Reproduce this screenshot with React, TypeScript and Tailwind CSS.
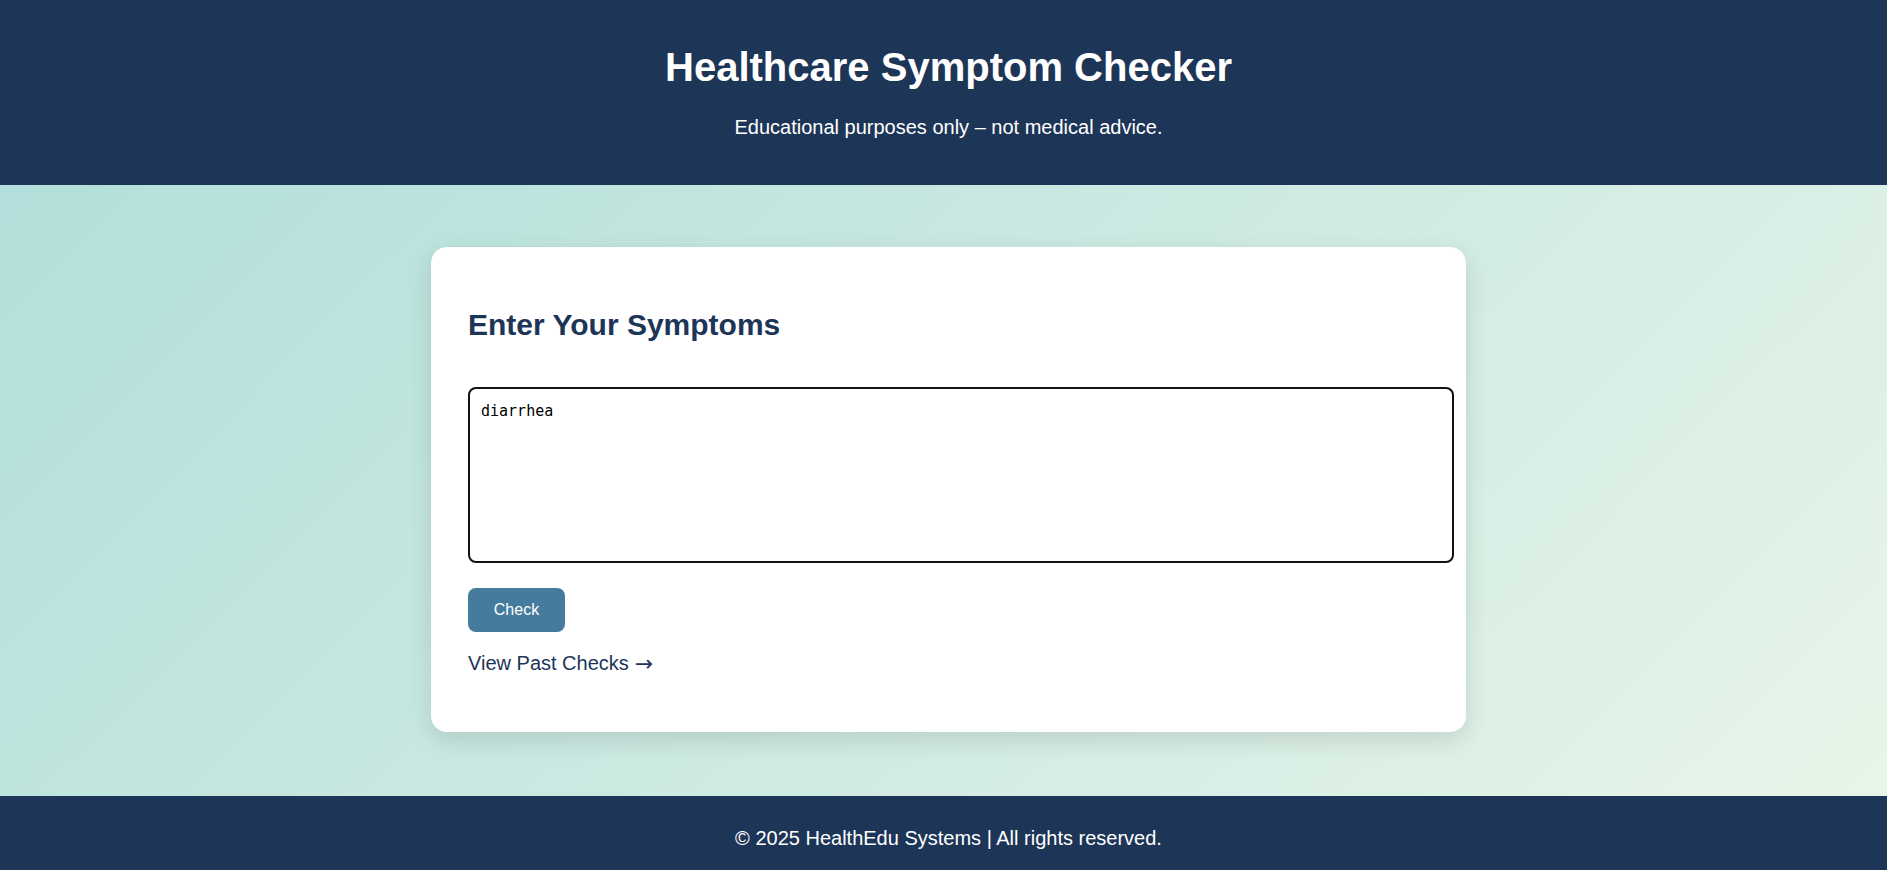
import { useEffect, useRef } from "react";

export default function App() {
  const boxRef = useRef<HTMLTextAreaElement>(null);

  useEffect(() => {
    const el = boxRef.current;
    if (el) {
      el.focus();
      el.setSelectionRange(el.value.length, el.value.length);
    }
  }, []);

  return (
    <div className="min-h-screen flex flex-col font-['Liberation_Sans',Arial,sans-serif]">
      {/* Header */}
      <header className="bg-[#1d3557] text-white text-center pl-[10px] pt-[44px] pb-[46px]">
        <h1 className="text-[40px] leading-[46px] font-bold">
          Healthcare Symptom Checker
        </h1>
        <p className="mt-[26px] text-[20px] leading-[23px]">
          Educational purposes only – not medical advice.
        </p>
      </header>

      {/* Main */}
      <main className="bg-[linear-gradient(135deg,#b2dfdb,#e8f5e9)] flex justify-center pl-[10px] pt-[62px] pb-[64px]">
        <div className="w-[1035px] bg-white rounded-2xl shadow-[0_8px_24px_rgba(0,0,0,0.12)] px-[37px] pt-[61px] pb-[57px]">
          <h2 className="text-[30px] leading-[34px] font-bold text-[#1d3557]">
            Enter Your Symptoms
          </h2>
          <textarea
            ref={boxRef}
            defaultValue="diarrhea"
            className="block mt-[45px] w-[986px] h-[176px] border-2 border-[#111] rounded-lg px-[11px] pt-[12px] pb-[8px] font-['DejaVu_Sans_Mono',monospace] text-[15px] leading-[20px] text-black outline-none resize-none caret-black"
          />
          <button className="mt-[25px] w-[97px] h-[44px] rounded-lg bg-[#457b9d] text-white text-[16px]">
            Check
          </button>
          <a
            href="#"
            className="mt-[20px] flex items-center gap-[6px] h-[23px] text-[20px] leading-[23px] text-[#1d3557] w-fit"
          >
            <span>View Past Checks</span>
            <span className="font-['DejaVu_Sans',sans-serif] text-[22px] leading-[23px]">→</span>
          </a>
        </div>
      </main>

      {/* Footer */}
      <footer className="bg-[#1d3557] text-white text-center pl-[10px] pt-[31px] pb-[32px]">
        <p className="text-[20px] leading-[23px]">
          © 2025 HealthEdu Systems | All rights reserved.
        </p>
      </footer>
    </div>
  );
}
